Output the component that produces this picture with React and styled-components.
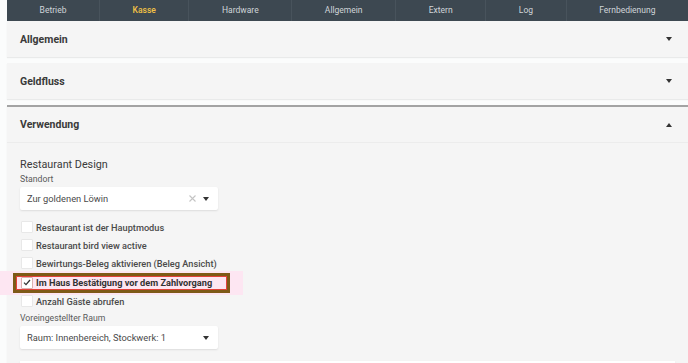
import styled, { createGlobalStyle } from "styled-components";

const GlobalStyle = createGlobalStyle`
    html, body {
        margin: 0;
        padding: 0;
        background: #fbfcfc;
        font-family: Roboto, "Liberation Sans", sans-serif;
        color: #333;
    }
    * {
        box-sizing: border-box;
    }
`;

const tabs = ["Betrieb", "Kasse", "Hardware", "Allgemein", "Extern", "Log", "Fernbedienung"];

const options = [
    { label: "Restaurant ist der Hauptmodus" },
    { label: "Restaurant bird view active" },
    { label: "Bewirtungs-Beleg aktivieren (Beleg Ansicht)" },
    { label: "Im Haus Bestätigung vor dem Zahlvorgang", checked: true, marked: true },
    { label: "Anzahl Gäste abrufen" },
];

const Caret = ({ up }) => (
    <CaretIcon width="6" height="4" viewBox="0 0 6 4">
        {up ? <path d="M0 4 L3 0 L6 4 Z" /> : <path d="M0 0 L6 0 L3 4 Z" />}
    </CaretIcon>
);

const Select = ({ value, clearable }) => (
    <SelectBox>
        <SelectValue>{value}</SelectValue>
        {clearable && (
            <ClearIcon width="7" height="7" viewBox="0 0 7 7">
                <path d="M0.5 0.5 L6.5 6.5 M6.5 0.5 L0.5 6.5" />
            </ClearIcon>
        )}
        <Caret />
    </SelectBox>
);

const App = () => {
    return (
        <Page>
            <GlobalStyle />
            <TabBar>
                {tabs.map((t) => (
                    <Tab key={t} $active={t === "Kasse"}>
                        {t}
                    </Tab>
                ))}
            </TabBar>

            <Panel>
                <PanelHeader>
                    <span>Allgemein</span>
                    <Caret />
                </PanelHeader>
            </Panel>

            <Panel>
                <PanelHeader>
                    <span>Geldfluss</span>
                    <Caret />
                </PanelHeader>
            </Panel>

            <Panel $open>
                <PanelHeader $open>
                    <span>Verwendung</span>
                    <Caret up />
                </PanelHeader>
                <PanelBody>
                    <SectionTitle>Restaurant Design</SectionTitle>
                    <FieldLabel>Standort</FieldLabel>
                    <Select value="Zur goldenen Löwin" clearable />

                    <CheckList>
                        {options.map((o) => (
                            <CheckRow key={o.label} $marked={o.marked}>
                                <CheckBox $checked={o.checked}>
                                    {o.checked && (
                                        <svg width="8" height="7" viewBox="0 0 8 7">
                                            <path
                                                d="M1 3.6 L3 5.6 L7 1"
                                                fill="none"
                                                stroke="#333"
                                                strokeWidth="1.3"
                                            />
                                        </svg>
                                    )}
                                </CheckBox>
                                <CheckLabel $marked={o.marked}>{o.label}</CheckLabel>
                            </CheckRow>
                        ))}
                    </CheckList>

                    <FieldLabel>Voreingestellter Raum</FieldLabel>
                    <Select value="Raum: Innenbereich, Stockwerk: 1" />
                    <WideBox />
                </PanelBody>
            </Panel>
        </Page>
    );
};

const Page = styled.div`
    padding-left: 7px;
    height: 363px;
    overflow: hidden;
`;

const TabBar = styled.nav`
    display: flex;
    height: 21px;
    background: #3d4851;
`;

const Tab = styled.div`
    flex: 1 1 auto;
    text-align: center;
    font-size: 8.5px;
    line-height: 21px;
    color: ${(p) => (p.$active ? "#f3c246" : "#d0d5d9")};
    font-weight: ${(p) => (p.$active ? 500 : 400)};
    & + & {
        border-left: 1px solid #48535c;
    }
`;

const Panel = styled.section`
    background: #f5f5f5;
    margin-bottom: ${(p) => (p.$open ? "0" : "6px")};
    box-shadow: 0 1px 1px rgba(0, 0, 0, 0.07);
    border-top: ${(p) => (p.$open ? "2px solid #a3a3a3" : "none")};
`;

const PanelHeader = styled.header`
    display: flex;
    align-items: center;
    justify-content: space-between;
    height: 36px;
    padding: 0 16px 0 13px;
    font-size: 10.5px;
    font-weight: 700;
    color: #3a3a3a;
    border-bottom: ${(p) => (p.$open ? "1px solid #ececec" : "none")};
`;

const CaretIcon = styled.svg`
    fill: #333;
    flex-shrink: 0;
`;

const PanelBody = styled.div`
    padding: 15px 13px 0;
    height: 300px;
`;

const SectionTitle = styled.div`
    font-size: 10.8px;
    line-height: 13px;
    color: #3a3a3a;
    margin-bottom: 3px;
`;

const FieldLabel = styled.div`
    font-size: 8.7px;
    line-height: 10px;
    color: #5a5a5a;
    margin-bottom: 3px;
`;

const SelectBox = styled.div`
    display: flex;
    align-items: center;
    gap: 7px;
    width: 198px;
    height: 23px;
    padding: 0 9px 0 7px;
    background: #fff;
    border-radius: 2px;
    box-shadow: 0 1px 2px rgba(0, 0, 0, 0.1);
`;

const SelectValue = styled.span`
    flex: 1;
    font-size: 9.3px;
    color: #4a4a4a;
    white-space: nowrap;
`;

const ClearIcon = styled.svg`
    stroke: #c4c4c4;
    stroke-width: 1.1;
    fill: none;
`;

const CheckList = styled.div`
    display: flex;
    flex-direction: column;
    align-items: flex-start;
    margin: 8px 0 3px;
`;

const CheckRow = styled.label`
    position: relative;
    display: flex;
    align-items: center;
    gap: 3px;
    height: ${(p) => (p.$marked ? "19px" : "18px")};
    margin-top: ${(p) => (p.$marked ? "1px" : "0")};

    ${(p) =>
        p.$marked &&
        `
        &::before {
            content: "";
            position: absolute;
            left: -20px;
            width: 243px;
            top: -2px;
            bottom: -3px;
            background: #fde6f2;
            z-index: 0;
        }
        &::after {
            content: "";
            position: absolute;
            left: -7px;
            width: 211px;
            top: 0;
            bottom: -1px;
            border: 3px solid #7e5a17;
            box-shadow: inset 0 0 0 1px #e2413b;
            z-index: 2;
        }
    `}
`;

const CheckBox = styled.span`
    position: relative;
    z-index: 1;
    display: flex;
    align-items: center;
    justify-content: center;
    width: 12px;
    height: 12px;
    margin-left: 1px;
    background: #fff;
    border: 1px solid ${(p) => (p.$checked ? "#dcb0b0" : "#e8e8e8")};
    border-radius: 1px;
`;

const CheckLabel = styled.span`
    position: relative;
    z-index: 1;
    font-size: 9.2px;
    font-weight: ${(p) => (p.$marked ? 700 : 500)};
    color: ${(p) => (p.$marked ? "#333" : "#4a4a4a")};
    white-space: nowrap;
`;

const WideBox = styled.div`
    margin-top: 12px;
    height: 20px;
    background: #fff;
    box-shadow: 0 1px 2px rgba(0, 0, 0, 0.08);
`;

export default App;
